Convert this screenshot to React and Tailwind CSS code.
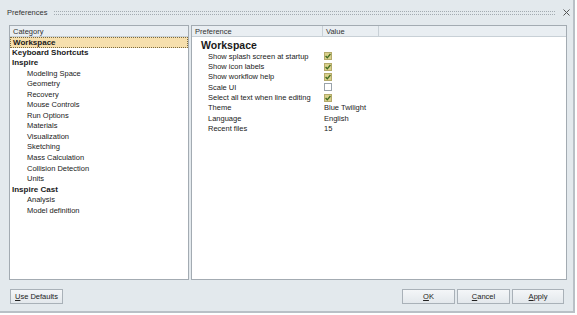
import React from 'react';

const categories = [
  { label: 'Workspace', bold: true, selected: true },
  { label: 'Keyboard Shortcuts', bold: true },
  { label: 'Inspire', bold: true },
  { label: 'Modeling Space' },
  { label: 'Geometry' },
  { label: 'Recovery' },
  { label: 'Mouse Controls' },
  { label: 'Run Options' },
  { label: 'Materials' },
  { label: 'Visualization' },
  { label: 'Sketching' },
  { label: 'Mass Calculation' },
  { label: 'Collision Detection' },
  { label: 'Units' },
  { label: 'Inspire Cast', bold: true },
  { label: 'Analysis' },
  { label: 'Model definition' },
];

const prefs = [
  { name: 'Show splash screen at startup', check: true },
  { name: 'Show icon labels', check: true },
  { name: 'Show workflow help', check: true },
  { name: 'Scale UI', check: false },
  { name: 'Select all text when line editing', check: true },
  { name: 'Theme', value: 'Blue Twilight' },
  { name: 'Language', value: 'English' },
  { name: 'Recent files', value: '15' },
];

function CheckBox({ checked }) {
  if (!checked) {
    return <div className="w-[8px] h-[8px] bg-white border border-[#9aa3ab]" />;
  }
  return (
    <div className="w-[8px] h-[8px] bg-[#d9d08c] border border-[#b3aa6a] flex items-center justify-center">
      <svg width="6" height="6" viewBox="0 0 6 6">
        <path d="M0.6 3 L2.3 4.8 L5.4 1" stroke="#3f6b1f" strokeWidth="1.3" fill="none" />
      </svg>
    </div>
  );
}

function Btn({ children, className }) {
  return (
    <button className={"h-[15px] border border-[#a9b1b8] bg-gradient-to-b from-[#f4f6f8] to-[#e3e8ec] text-[7.5px] text-[#222] flex items-center justify-center " + className}>
      {children}
    </button>
  );
}

export default function App() {
  return (
    <div className="w-[577px] h-[315px] bg-white font-['Liberation_Sans',Arial,sans-serif] text-[#1a1a1a]">
      <div className="w-[575px] h-[313px] bg-[#e3e9ed] border-r-2 border-b-2 border-[#b9c0c6] flex flex-col">
        {/* title bar */}
        <div className="h-[25px] flex items-center pl-[7px] pr-[3px]">
          <span className="text-[7.5px] text-[#333]">Preferences</span>
          <div className="flex-1 ml-[7px] mr-[8px] h-[4px] border-t border-b border-dotted border-[#a3abb1]" />
          <svg width="7" height="7" viewBox="0 0 7 7">
            <path d="M0.5 0.5 L6.5 6.5 M6.5 0.5 L0.5 6.5" stroke="#555" strokeWidth="1" />
          </svg>
        </div>

        {/* panels */}
        <div className="flex gap-[2px] pl-[9px] h-[255px]">
          <div className="w-[180px] h-full bg-white border border-[#a3abb2] flex flex-col">
            <div className="h-[11px] bg-[#e9eef2] border-b border-[#c8d0d6] text-[7.5px] leading-[11px] pl-[3px] text-[#333]">Category</div>
            <div className="flex flex-col">
              {categories.map((c) => (
                <div
                  key={c.label}
                  className={
                    'h-[10.55px] leading-[10.55px] whitespace-nowrap ' +
                    (c.bold ? 'text-[8px] font-bold pl-[2px] ' : 'text-[7.5px] pl-[17px] ') +
                    (c.selected ? 'bg-[#f6dfad] border border-dotted border-[#7a6a40] pl-[1px]' : '')
                  }
                >
                  {c.label}
                </div>
              ))}
            </div>
          </div>

          <div className="w-[376px] h-full bg-white border border-[#a3abb2] flex flex-col">
            <div className="h-[11px] bg-[#e9eef2] border-b border-[#c8d0d6] flex text-[7.5px] leading-[11px] text-[#333]">
              <div className="w-[131px] pl-[3px] border-r border-[#c8d0d6]">Preference</div>
              <div className="w-[56px] pl-[3px] border-r border-[#c8d0d6]">Value</div>
            </div>
            <div className="pl-[9px] pt-[2px] text-[10.5px] font-bold leading-[12px]">Workspace</div>
            <div className="flex flex-col">
              {prefs.map((p) => (
                <div key={p.name} className="flex h-[10.35px] items-center text-[7.5px]">
                  <div className="w-[132px] pl-[16px] whitespace-nowrap">{p.name}</div>
                  {p.value ? <div>{p.value}</div> : <CheckBox checked={p.check} />}
                </div>
              ))}
            </div>
          </div>
        </div>

        {/* footer */}
        <div className="flex items-center pl-[10px] pr-[9px] pt-[9px]">
          <Btn className="w-[53px]">
            <span><u>U</u>se Defaults</span>
          </Btn>
          <div className="flex-1" />
          <div className="flex gap-[2px]">
            <Btn className="w-[53px]"><span><u>O</u>K</span></Btn>
            <Btn className="w-[53px]"><span><u>C</u>ancel</span></Btn>
            <Btn className="w-[52px]"><span><u>A</u>pply</span></Btn>
          </div>
        </div>
      </div>
    </div>
  );
}
